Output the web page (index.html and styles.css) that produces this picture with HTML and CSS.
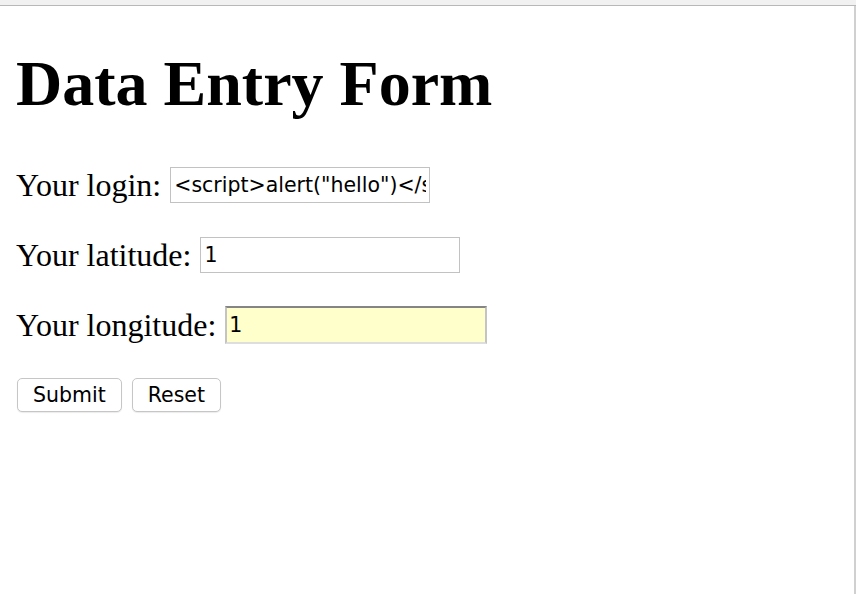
FILE: index.html
```html
<!DOCTYPE html>
<html lang="en">
<head>
<meta charset="utf-8">
<title>Data Entry Form</title>
<link rel="stylesheet" href="styles.css">
</head>
<body>
<div class="topbar"></div>
<div class="viewport">
  <main class="page">
    <h1 class="title">Data Entry Form</h1>
    <form class="form">
      <div class="row">
        <span class="label">Your login:</span>
        <input class="field" type="text" value="&lt;script&gt;alert(&quot;hello&quot;)&lt;/script&gt;">
      </div>
      <div class="row">
        <span class="label">Your latitude:</span>
        <input class="field" type="text" value="1">
      </div>
      <div class="row">
        <span class="label">Your longitude:</span>
        <input class="field field-focus" type="text" value="1">
      </div>
      <div class="row buttons">
        <button class="btn" type="button">Submit</button>
        <button class="btn" type="button">Reset</button>
      </div>
    </form>
  </main>
  <div class="scrollstrip"></div>
</div>
</body>
</html>
```

FILE: styles.css
```css
html, body {
  margin: 0;
  padding: 0;
  height: 100%;
  background: #ffffff;
}

body {
  display: flex;
  flex-direction: column;
  font-family: "Liberation Serif", "Times New Roman", serif;
  color: #000;
}

.topbar {
  height: 5px;
  background: #f1f1f1;
  border-bottom: 1px solid #b8b8b8;
  flex: none;
}

.viewport {
  flex: 1;
  display: flex;
}

.page {
  flex: 1;
  padding: 0 16px;
}

.scrollstrip {
  width: 2px;
  background: #d0d0d0;
  flex: none;
}

.title {
  font-size: 64px;
  font-weight: bold;
  margin: 41px 0 46px;
  line-height: normal;
}

.form {
  display: flex;
  flex-direction: column;
  gap: 34px;
}

.row {
  display: flex;
  align-items: center;
  gap: 9px;
  height: 36px;
}

.label {
  font-size: 32px;
  line-height: normal;
  white-space: nowrap;
}

.field {
  box-sizing: border-box;
  width: 260px;
  height: 36px;
  margin: 0;
  padding: 0 3px;
  border: 1px solid #c2c2c2;
  background: #fff;
  font-family: "DejaVu Sans", Verdana, sans-serif;
  font-size: 20.5px;
  color: #000;
  outline: none;
}

.field-focus {
  width: 262px;
  height: 38px;
  background: #ffffcc;
  border-top: 2px solid #858585;
  border-left: 2px solid #c4c4c4;
  border-right: 2px solid #c4c4c4;
  border-bottom: 2px solid #dedede;
  padding: 0 2px;
}

.buttons {
  gap: 10px;
  height: 34px;
  padding-left: 1px;
  margin-top: 1px;
}

.btn {
  box-sizing: border-box;
  height: 34px;
  margin: 0;
  padding: 0 15px;
  border: 1px solid #c6c6c6;
  border-radius: 5px;
  background: #fff;
  box-shadow: 0 1px 1px rgba(0, 0, 0, 0.08);
  font-family: "DejaVu Sans", Verdana, sans-serif;
  font-size: 20.5px;
  color: #000;
}
```
